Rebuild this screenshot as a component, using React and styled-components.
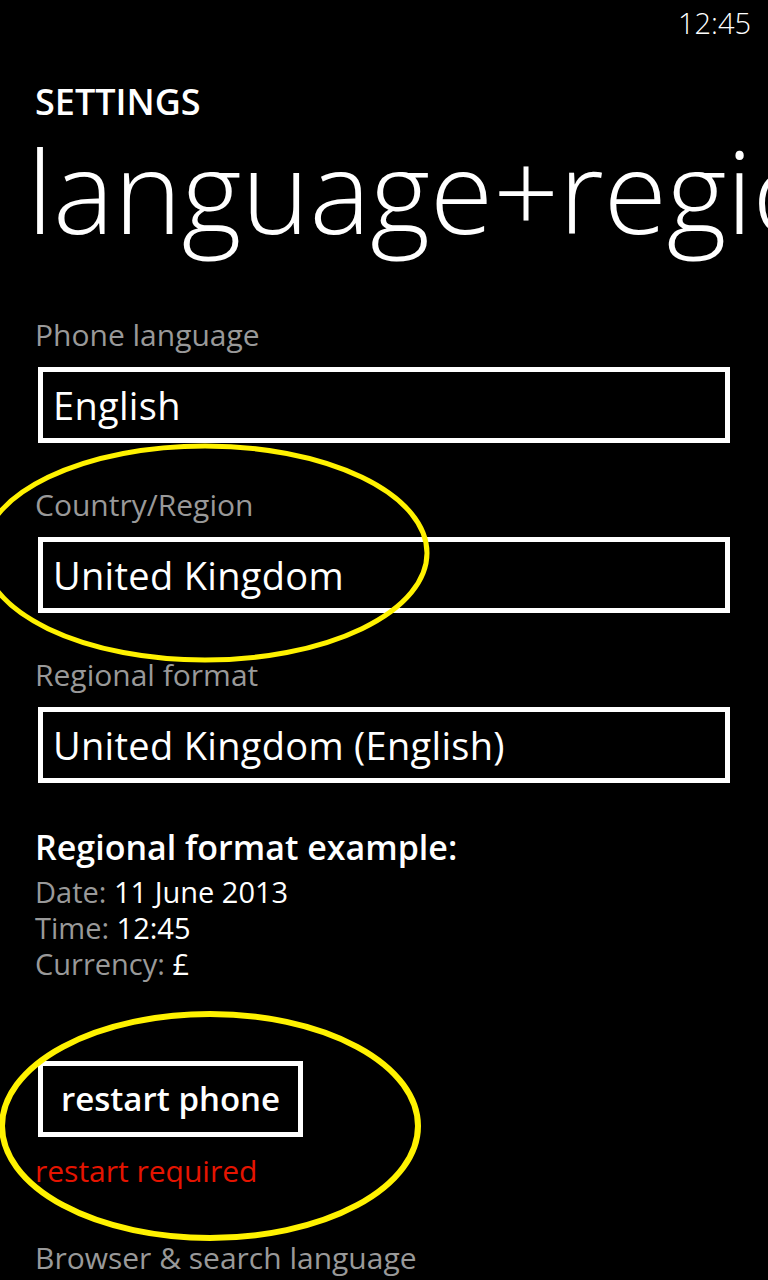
import React from "react";
import styled, { createGlobalStyle } from "styled-components";

const GlobalStyle = createGlobalStyle`
  html, body {
    margin: 0;
    padding: 0;
    background: #000;
  }
  body {
    font-family: "Open Sans", "Noto Sans", "DejaVu Sans", sans-serif;
    color: #fff;
  }
`;

const Screen = styled.div`
  position: relative;
  width: 768px;
  height: 1280px;
  overflow: hidden;
  background: #000;
  color: #fff;
`;

const StatusBar = styled.div`
  display: flex;
  justify-content: flex-end;
  padding: 3px 17px 0 0;
  height: 40px;
`;

const Clock = styled.span`
  font-size: 29px;
  line-height: 40px;
  font-weight: 300;
`;

const Header = styled.header`
  display: flex;
  flex-direction: column;
  padding-top: 37px;
`;

const AppTitle = styled.div`
  font-size: 36px;
  line-height: 44px;
  font-weight: 600;
  padding-left: 35px;
`;

const PageTitle = styled.h1`
  margin: 1px 0 0;
  font-size: 115px;
  line-height: 130px;
  font-weight: 300;
  white-space: nowrap;
  padding-left: 27px;
`;

const Content = styled.main`
  display: flex;
  flex-direction: column;
  padding: 60px 38px 0 35px;
`;

const Fields = styled.div`
  display: flex;
  flex-direction: column;
  gap: 42px;
`;

const Field = styled.div`
  display: flex;
  flex-direction: column;
  gap: 12px;
`;

const Label = styled.div`
  font-size: 30px;
  line-height: 40px;
  color: ${(p) => p.$color || "#999"};
  margin-top: ${(p) => p.$top || 0}px;
`;

const Picker = styled.div`
  margin-left: 3px;
  height: 66px;
  border: 5px solid #fff;
  padding: 0 10px;
  font-size: 38px;
  letter-spacing: 0.3px;
  line-height: 66px;
  white-space: nowrap;
`;

const Example = styled.section`
  display: flex;
  flex-direction: column;
  margin-top: 44px;
`;

const ExampleTitle = styled.div`
  font-size: 34px;
  line-height: 40px;
  font-weight: 600;
  margin-bottom: 7px;
`;

const ExampleLine = styled.div`
  font-size: 29px;
  line-height: 36px;
`;

const Key = styled.span`
  color: #999;
`;

const RestartButton = styled.button`
  align-self: flex-start;
  margin: 79px 0 0 3px;
  height: 76px;
  border: 5px solid #fff;
  background: #000;
  color: #fff;
  padding: 0 18px;
  font-family: inherit;
  font-size: 33px;
  font-weight: 600;
  line-height: 66px;
`;

const Annotations = styled.svg`
  position: absolute;
  inset: 0;
  pointer-events: none;
`;

const fields = [
  { label: "Phone language", value: "English" },
  { label: "Country/Region", value: "United Kingdom" },
  { label: "Regional format", value: "United Kingdom (English)" },
];

export default function App() {
  return (
    <>
      <GlobalStyle />
      <Screen>
        <StatusBar>
          <Clock>12:45</Clock>
        </StatusBar>
        <Header>
          <AppTitle>SETTINGS</AppTitle>
          <PageTitle>language+region</PageTitle>
        </Header>
        <Content>
          <Fields>
            {fields.map((f) => (
              <Field key={f.label}>
                <Label>{f.label}</Label>
                <Picker>{f.value}</Picker>
              </Field>
            ))}
          </Fields>
          <Example>
            <ExampleTitle>Regional format example:</ExampleTitle>
            <ExampleLine>
              <Key>Date:</Key> 11 June 2013
            </ExampleLine>
            <ExampleLine>
              <Key>Time:</Key> 12:45
            </ExampleLine>
            <ExampleLine>
              <Key>Currency:</Key> £
            </ExampleLine>
          </Example>
          <RestartButton>restart phone</RestartButton>
          <Label $color="#e51400" $top={14}>restart required</Label>
          <Label $top={47}>Browser &amp; search language</Label>
        </Content>
        <Annotations width="768" height="1280" viewBox="0 0 768 1280">
          <ellipse cx="205" cy="553" rx="222" ry="107" fill="none" stroke="#fff200" strokeWidth="5" />
          <ellipse cx="210" cy="1126" rx="208" ry="112" fill="none" stroke="#fff200" strokeWidth="6" />
        </Annotations>
      </Screen>
    </>
  );
}
